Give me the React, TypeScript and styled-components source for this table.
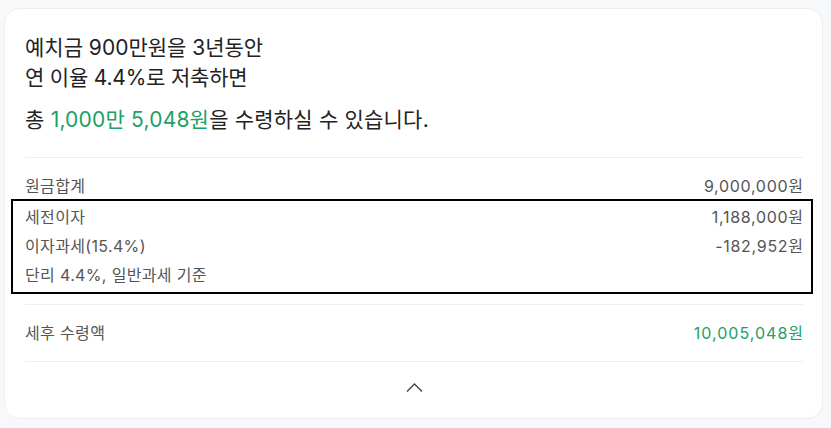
import React from "react";
import styled, { createGlobalStyle } from "styled-components";

const Global = createGlobalStyle`
  html, body { margin: 0; padding: 0; background: #f7f8fa; }
  body { font-family: Inter, "Noto Sans CJK KR", "Noto Sans", sans-serif; }
  * { box-sizing: border-box; }
`;

const Page = styled.div`
  padding: 8px 8px 8px 4px;
`;

const Card = styled.section`
  background: #fff;
  border: 1px solid #eceef1;
  border-radius: 16px;
  padding: 0 19px 0 20px;
`;

const Summary = styled.div`
  padding-top: 24px;
  padding-bottom: 22px;
  border-bottom: 1px solid #eeeff1;
`;

const Line = styled.p<{ $gap?: number; $spacing?: number }>`
  margin: ${(p) => p.$gap ?? 0}px 0 0;
  font-size: 21px;
  line-height: 30px;
  color: #222;
  letter-spacing: ${(p) => p.$spacing ?? 0}px;
`;

const Green = styled.span`
  color: #21a064;
`;

const Details = styled.div`
  padding-top: 12px;
  padding-bottom: 10px;
  border-bottom: 1px solid #eeeff1;
`;

const Row = styled.div`
  display: flex;
  justify-content: space-between;
  align-items: center;
  height: 29px;
  font-size: 16px;
  color: #555;
`;

const Label = styled.span`
  letter-spacing: 0.35px;
`;

const Value = styled.span<{ $accent?: boolean }>`
  color: ${(p) => (p.$accent ? "#21a064" : "#555")};
  letter-spacing: ${(p) => (p.$accent ? 1 : 0.7)}px;
  margin-right: ${(p) => (p.$accent ? -1 : -0.7)}px;
`;

const Highlight = styled.div`
  border: 2px solid #000;
  margin: 0 -10px 0 -14px;
  padding: 0 8px 4px 12px;
`;

const Total = styled.div`
  padding: 12px 0 15px;
  border-bottom: 1px solid #eeeff1;
`;

const Footer = styled.div`
  display: flex;
  justify-content: center;
  padding: 19px 0 25px;
`;

const Toggle = styled.button`
  border: 0;
  background: none;
  padding: 0;
  width: 18px;
  height: 12px;
  display: flex;
  align-items: center;
  justify-content: center;
  cursor: pointer;
`;

export default function App() {
  return (
    <>
      <Global />
      <Page>
        <Card>
          <Summary>
            <Line>예치금 900만원을 3년동안</Line>
            <Line $spacing={-0.2}>연 이율 4.4%로 저축하면</Line>
            <Line $gap={12} $spacing={0.2}>
              총 <Green>1,000만 5,048원</Green>을 수령하실 수 있습니다.
            </Line>
          </Summary>
          <Details>
            <Row>
              <Label>원금합계</Label>
              <Value>9,000,000원</Value>
            </Row>
            <Highlight>
              <Row>
                <Label>세전이자</Label>
                <Value>1,188,000원</Value>
              </Row>
              <Row>
                <Label>이자과세(15.4%)</Label>
                <Value>-182,952원</Value>
              </Row>
              <Row>
                <Label>단리 4.4%, 일반과세 기준</Label>
              </Row>
            </Highlight>
          </Details>
          <Total>
            <Row>
              <Label>세후 수령액</Label>
              <Value $accent>10,005,048원</Value>
            </Row>
          </Total>
          <Footer>
            <Toggle aria-label="접기">
              <svg width="17" height="11" viewBox="0 0 17 11" fill="none">
                <path d="M1 9.5L8.5 2L16 9.5" stroke="#444" strokeWidth="1.4" />
              </svg>
            </Toggle>
          </Footer>
        </Card>
      </Page>
    </>
  );
}
